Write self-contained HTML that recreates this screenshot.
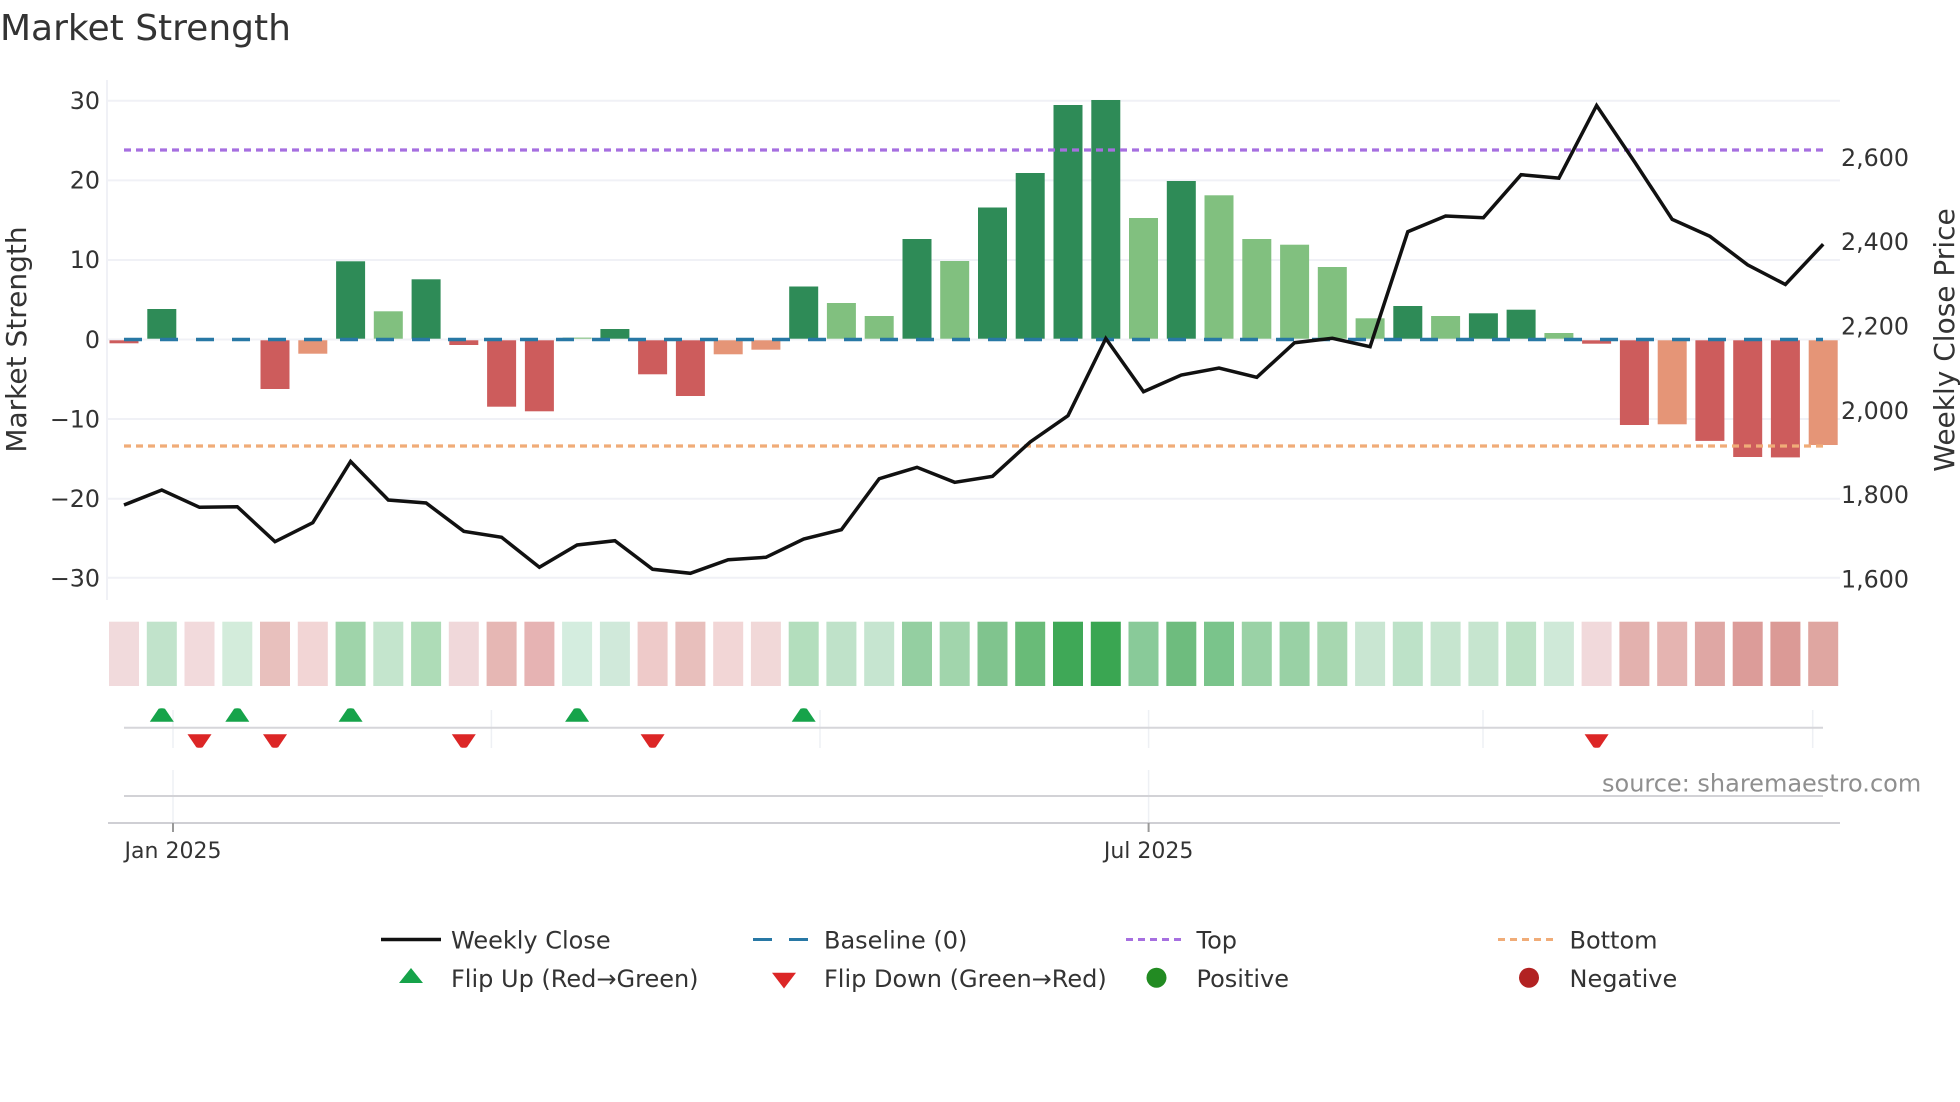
<!DOCTYPE html>
<html lang="en">
<head>
<meta charset="utf-8">
<title>Market Strength</title>
<style>
html,body{margin:0;padding:0;background:#fff;width:1960px;height:1102px;overflow:hidden}
svg{position:absolute;left:0;top:0;display:block}
text{font-family:"DejaVu Sans","Liberation Sans",sans-serif;fill:#333}
.t{font-size:23.75px}
.at{font-size:28px}
.lg{font-size:24px}
.xt{font-size:22px}
.dg{fill:#2e8b57}.lg2{fill:#81c07f}.rd{fill:#cd5c5c}.sa{fill:#e59577}
.grid{stroke:#f0f1f6;stroke-width:2}
</style>
</head>
<body>
<svg width="1960" height="1102" viewBox="0 0 1960 1102" xmlns="http://www.w3.org/2000/svg">
<defs>
<path id="up" d="M-12,6.7 L12,6.7 L3.2,-6.2 Q0,-7.4 -3.2,-6.2Z" fill="#16a34a"/>
<path id="dn" d="M-12,-6.7 L12,-6.7 L3.2,6.2 Q0,7.4 -3.2,6.2Z" fill="#dc2626"/>
</defs>
<rect width="1960" height="1102" fill="#fff"/>
<text x="0" y="40" style="font-size:36px">Market Strength</text>

<!-- grid -->
<line x1="107" y1="80" x2="107" y2="600" stroke="#f0f1f6" stroke-width="2"/>
<line class="grid" x1="107" y1="100.7" x2="1840" y2="100.7"/>
<line class="grid" x1="107" y1="180.4" x2="1840" y2="180.4"/>
<line class="grid" x1="107" y1="260" x2="1840" y2="260"/>
<line class="grid" x1="107" y1="339.5" x2="1840" y2="339.5"/>
<line class="grid" x1="107" y1="419" x2="1840" y2="419"/>
<line class="grid" x1="107" y1="498.7" x2="1840" y2="498.7"/>
<line class="grid" x1="107" y1="577.7" x2="1840" y2="577.7"/>

<!-- left ticks -->
<g class="t" text-anchor="end">
<text x="100" y="108.8">30</text>
<text x="100" y="188.4">20</text>
<text x="100" y="268">10</text>
<text x="100" y="347.8">0</text>
<text x="100" y="427.4">−10</text>
<text x="100" y="507">−20</text>
<text x="100" y="586.4">−30</text>
</g>
<!-- right ticks -->
<g class="t">
<text x="1841" y="166">2,600</text>
<text x="1841" y="250">2,400</text>
<text x="1841" y="334.3">2,200</text>
<text x="1841" y="418.8">2,000</text>
<text x="1841" y="503">1,800</text>
<text x="1841" y="587.5">1,600</text>
</g>
<text class="at" transform="translate(26,339.5) rotate(-90)" text-anchor="middle">Market Strength</text>
<text class="at" transform="translate(1954,340) rotate(-90)" text-anchor="middle">Weekly Close Price</text>

<!-- bars -->
<rect class="rd" x="109.5" y="340.3" width="29" height="3"/>
<rect class="dg" x="147.3" y="309" width="29" height="29.7"/>
<rect class="rd" x="260.5" y="340.3" width="29" height="48.7"/>
<rect class="sa" x="298.3" y="340.3" width="29" height="13.4"/>
<rect class="dg" x="336.1" y="261.3" width="29" height="77.4"/>
<rect class="lg2" x="373.8" y="311.3" width="29" height="27.4"/>
<rect class="dg" x="411.6" y="279.3" width="29" height="59.4"/>
<rect class="rd" x="449.3" y="340.3" width="29" height="4.7"/>
<rect class="rd" x="487.1" y="340.3" width="29" height="66.4"/>
<rect class="rd" x="524.9" y="340.3" width="29" height="71"/>
<rect class="lg2" x="562.6" y="337.6" width="29" height="1.1"/>
<rect class="dg" x="600.4" y="329" width="29" height="9.7"/>
<rect class="rd" x="638.1" y="340.3" width="29" height="34"/>
<rect class="rd" x="675.9" y="340.3" width="29" height="55.7"/>
<rect class="sa" x="713.7" y="340.3" width="29" height="14"/>
<rect class="sa" x="751.4" y="340.3" width="29" height="9.4"/>
<rect class="dg" x="789.2" y="286.5" width="29" height="52.2"/>
<rect class="lg2" x="826.9" y="303" width="29" height="35.7"/>
<rect class="lg2" x="864.7" y="316" width="29" height="22.7"/>
<rect class="dg" x="902.5" y="239" width="29" height="99.7"/>
<rect class="lg2" x="940.2" y="261" width="29" height="77.7"/>
<rect class="dg" x="978" y="207.5" width="29" height="131.2"/>
<rect class="dg" x="1015.7" y="173" width="29" height="165.7"/>
<rect class="dg" x="1053.5" y="105" width="29" height="233.7"/>
<rect class="dg" x="1091.3" y="100" width="29" height="238.7"/>
<rect class="lg2" x="1129" y="218" width="29" height="120.7"/>
<rect class="dg" x="1166.8" y="181" width="29" height="157.7"/>
<rect class="lg2" x="1204.5" y="195.3" width="29" height="143.4"/>
<rect class="lg2" x="1242.3" y="239" width="29" height="99.7"/>
<rect class="lg2" x="1280.1" y="244.7" width="29" height="94"/>
<rect class="lg2" x="1317.8" y="267" width="29" height="71.7"/>
<rect class="lg2" x="1355.6" y="318.3" width="29" height="20.4"/>
<rect class="dg" x="1393.3" y="306" width="29" height="32.7"/>
<rect class="lg2" x="1431.1" y="316" width="29" height="22.7"/>
<rect class="dg" x="1468.9" y="313.3" width="29" height="25.4"/>
<rect class="dg" x="1506.6" y="309.7" width="29" height="29"/>
<rect class="lg2" x="1544.4" y="333" width="29" height="5.7"/>
<rect class="rd" x="1582.1" y="340.3" width="29" height="3.4"/>
<rect class="rd" x="1619.9" y="340.3" width="29" height="84.7"/>
<rect class="sa" x="1657.7" y="340.3" width="29" height="84"/>
<rect class="rd" x="1695.4" y="340.3" width="29" height="100.6"/>
<rect class="rd" x="1733.2" y="340.3" width="29" height="116.7"/>
<rect class="rd" x="1770.9" y="340.3" width="29" height="117.1"/>
<rect class="sa" x="1808.7" y="340.3" width="29" height="104.7"/>

<!-- reference lines -->
<line x1="124" y1="339.5" x2="1823" y2="339.5" stroke="#2878a5" stroke-width="3.5" stroke-dasharray="18 18"/>
<line x1="124" y1="150" x2="1823" y2="150" stroke="#a66fe0" stroke-width="3.2" stroke-dasharray="7 5"/>
<line x1="124" y1="446" x2="1823" y2="446" stroke="#f0ac78" stroke-width="3.2" stroke-dasharray="7 5"/>

<!-- weekly close -->
<polyline fill="none" stroke="#111" stroke-width="3.5" stroke-linejoin="miter" points="124,505 161.8,490 199.5,507.3 237.3,506.7 275,541.7 312.8,522.7 350.6,461.5 388.3,500 426.1,503 463.8,531.3 501.6,537.3 539.4,567.3 577.1,545 614.9,540.7 652.6,569.3 690.4,573.3 728.2,559.7 765.9,557.3 803.7,539 841.4,529.7 879.2,478.7 917,467.3 954.7,482.3 992.5,476.3 1030.2,442 1068,415.7 1105.8,338.5 1143.5,391.7 1181.3,375 1219,368 1256.8,377.3 1294.6,342.7 1332.3,338.3 1370.1,346.7 1407.8,231.7 1445.6,216 1483.4,217.7 1521.1,174.7 1558.9,178.1 1596.6,105.5 1634.4,161.6 1672.2,219.4 1709.9,236.3 1747.7,264.9 1785.4,284.5 1823.2,244.2"/>

<!-- heat strip -->
<g>
<rect x="109" y="621.7" width="30" height="64.3" fill="#f1dadc"/>
<rect x="146.8" y="621.7" width="30" height="64.3" fill="#c1e3cb"/>
<rect x="184.5" y="621.7" width="30" height="64.3" fill="#f2dadc"/>
<rect x="222.3" y="621.7" width="30" height="64.3" fill="#d3ecdb"/>
<rect x="260" y="621.7" width="30" height="64.3" fill="#e8c0bd"/>
<rect x="297.8" y="621.7" width="30" height="64.3" fill="#f2d5d5"/>
<rect x="335.6" y="621.7" width="30" height="64.3" fill="#9fd4aa"/>
<rect x="373.3" y="621.7" width="30" height="64.3" fill="#c4e5cd"/>
<rect x="411.1" y="621.7" width="30" height="64.3" fill="#aedcb7"/>
<rect x="448.8" y="621.7" width="30" height="64.3" fill="#f0d8da"/>
<rect x="486.6" y="621.7" width="30" height="64.3" fill="#e6b7b4"/>
<rect x="524.4" y="621.7" width="30" height="64.3" fill="#e6b3b3"/>
<rect x="562.1" y="621.7" width="30" height="64.3" fill="#d4eddf"/>
<rect x="599.9" y="621.7" width="30" height="64.3" fill="#d0e9da"/>
<rect x="637.6" y="621.7" width="30" height="64.3" fill="#eecac9"/>
<rect x="675.4" y="621.7" width="30" height="64.3" fill="#e8bfbc"/>
<rect x="713.2" y="621.7" width="30" height="64.3" fill="#f2d6d6"/>
<rect x="750.9" y="621.7" width="30" height="64.3" fill="#f1d8d8"/>
<rect x="788.7" y="621.7" width="30" height="64.3" fill="#b3debd"/>
<rect x="826.4" y="621.7" width="30" height="64.3" fill="#bfe2c9"/>
<rect x="864.2" y="621.7" width="30" height="64.3" fill="#c6e5d0"/>
<rect x="902" y="621.7" width="30" height="64.3" fill="#94cfa1"/>
<rect x="939.7" y="621.7" width="30" height="64.3" fill="#a1d5ac"/>
<rect x="977.5" y="621.7" width="30" height="64.3" fill="#80c48e"/>
<rect x="1015.2" y="621.7" width="30" height="64.3" fill="#69bb78"/>
<rect x="1053" y="621.7" width="30" height="64.3" fill="#3fa857"/>
<rect x="1090.8" y="621.7" width="30" height="64.3" fill="#3aa652"/>
<rect x="1128.5" y="621.7" width="30" height="64.3" fill="#89ca99"/>
<rect x="1166.3" y="621.7" width="30" height="64.3" fill="#6ebc7e"/>
<rect x="1204" y="621.7" width="30" height="64.3" fill="#7ac48b"/>
<rect x="1241.8" y="621.7" width="30" height="64.3" fill="#9ad2a6"/>
<rect x="1279.6" y="621.7" width="30" height="64.3" fill="#99d1a5"/>
<rect x="1317.3" y="621.7" width="30" height="64.3" fill="#a7d7b0"/>
<rect x="1355.1" y="621.7" width="30" height="64.3" fill="#c9e6d2"/>
<rect x="1392.8" y="621.7" width="30" height="64.3" fill="#bde2c8"/>
<rect x="1430.6" y="621.7" width="30" height="64.3" fill="#c6e5cf"/>
<rect x="1468.4" y="621.7" width="30" height="64.3" fill="#c6e5cf"/>
<rect x="1506.1" y="621.7" width="30" height="64.3" fill="#bde2c6"/>
<rect x="1543.9" y="621.7" width="30" height="64.3" fill="#cfe9d8"/>
<rect x="1581.6" y="621.7" width="30" height="64.3" fill="#f1d9db"/>
<rect x="1619.4" y="621.7" width="30" height="64.3" fill="#e3b1ae"/>
<rect x="1657.2" y="621.7" width="30" height="64.3" fill="#e5b4b1"/>
<rect x="1694.9" y="621.7" width="30" height="64.3" fill="#dfa7a4"/>
<rect x="1732.7" y="621.7" width="30" height="64.3" fill="#dc9c99"/>
<rect x="1770.4" y="621.7" width="30" height="64.3" fill="#db9a96"/>
<rect x="1808.2" y="621.7" width="30" height="64.3" fill="#dfa6a1"/>
</g>

<!-- flip row -->
<g stroke="#eef0f4" stroke-width="1.5">
<line x1="173" y1="710" x2="173" y2="748"/>
<line x1="491.4" y1="710" x2="491.4" y2="748"/>
<line x1="820" y1="710" x2="820" y2="748"/>
<line x1="1148.6" y1="710" x2="1148.6" y2="748"/>
<line x1="1483" y1="710" x2="1483" y2="748"/>
<line x1="1812.7" y1="710" x2="1812.7" y2="748"/>
<line x1="173" y1="770" x2="173" y2="823"/>
<line x1="1148.6" y1="770" x2="1148.6" y2="823"/>
</g>
<line x1="124" y1="727.7" x2="1823" y2="727.7" stroke="#d6d6da" stroke-width="2"/>
<line x1="124" y1="796" x2="1823" y2="796" stroke="#d2d2d6" stroke-width="2"/>
<line x1="108" y1="823" x2="1840" y2="823" stroke="#cfcfd4" stroke-width="2"/>
<line x1="173" y1="823" x2="173" y2="832" stroke="#999" stroke-width="2"/>
<line x1="1148.6" y1="823" x2="1148.6" y2="832" stroke="#999" stroke-width="2"/>

<use href="#up" x="161.8" y="715"/>
<use href="#up" x="237.3" y="715"/>
<use href="#up" x="350.6" y="715"/>
<use href="#up" x="577.1" y="715"/>
<use href="#up" x="803.7" y="715"/>
<use href="#dn" x="199.5" y="741"/>
<use href="#dn" x="275" y="741"/>
<use href="#dn" x="463.8" y="741"/>
<use href="#dn" x="652.6" y="741"/>
<use href="#dn" x="1596.6" y="741"/>

<text class="xt" x="173" y="858" text-anchor="middle">Jan 2025</text>
<text class="xt" x="1148.6" y="858" text-anchor="middle">Jul 2025</text>
<text x="1602" y="791.5" style="font-size:24px;fill:#8f8f8f">source: sharemaestro.com</text>

<!-- legend -->
<line x1="381" y1="939.5" x2="441" y2="939.5" stroke="#111" stroke-width="3.5"/>
<text class="lg" x="451" y="948.3">Weekly Close</text>
<line x1="753" y1="939.5" x2="808" y2="939.5" stroke="#2878a5" stroke-width="3" stroke-dasharray="19 17"/>
<text class="lg" x="824" y="948.3">Baseline (0)</text>
<line x1="1126" y1="939.5" x2="1181" y2="939.5" stroke="#a66fe0" stroke-width="3" stroke-dasharray="7 5"/>
<text class="lg" x="1196.5" y="948.3">Top</text>
<line x1="1498" y1="939.5" x2="1554" y2="939.5" stroke="#f0ac78" stroke-width="3" stroke-dasharray="7 5"/>
<text class="lg" x="1569.5" y="948.3">Bottom</text>

<path d="M399,983 L423,983 L411,968Z" fill="#16a34a"/>
<text class="lg" x="451" y="986.8">Flip Up (Red→Green)</text>
<path d="M772,972.7 L796,972.7 L784,988.5Z" fill="#dc2626"/>
<text class="lg" x="824" y="986.8">Flip Down (Green→Red)</text>
<circle cx="1156.5" cy="977.7" r="10" fill="#228b22"/>
<text class="lg" x="1196.5" y="986.8">Positive</text>
<circle cx="1529" cy="977.7" r="10" fill="#b22222"/>
<text class="lg" x="1569.5" y="986.8">Negative</text>
</svg>
</body>
</html>
